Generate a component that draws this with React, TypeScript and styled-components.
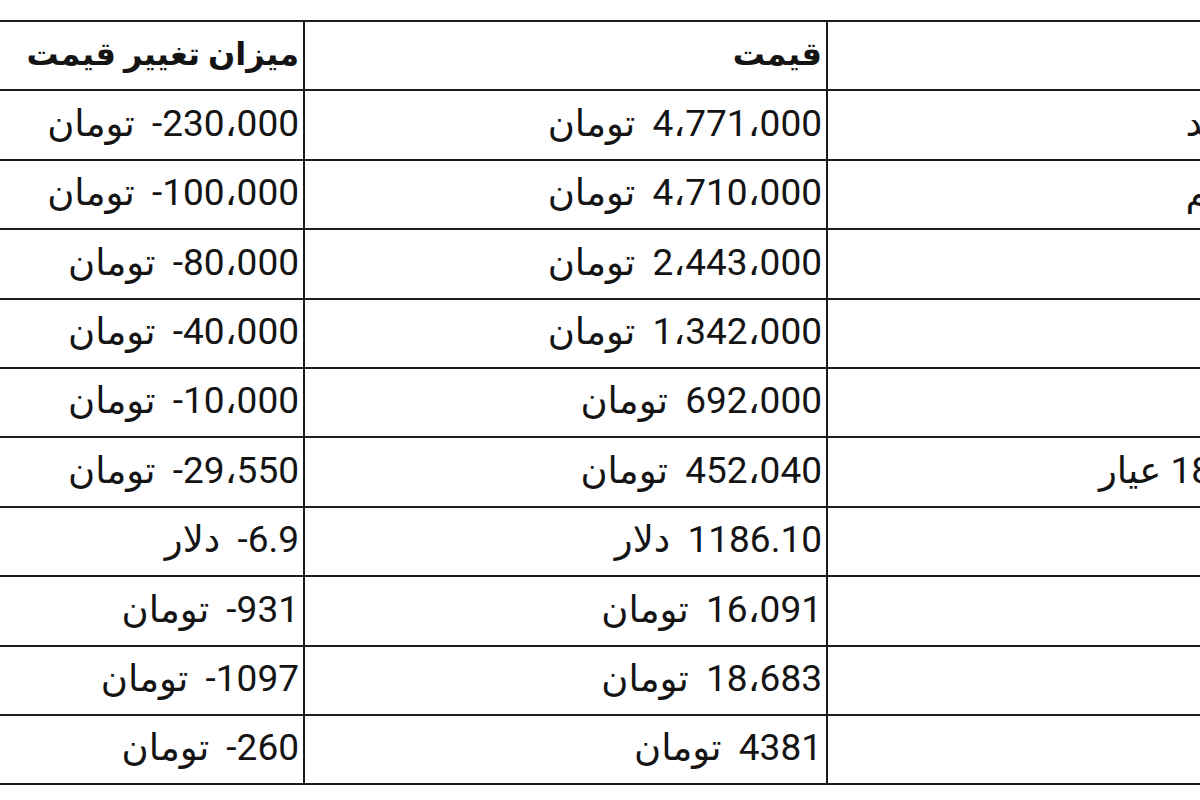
import React from "react";
import styled, { createGlobalStyle } from "styled-components";

const GlobalStyle = createGlobalStyle`
  html, body {
    margin: 0;
    padding: 0;
    background: #ffffff;
  }
  body {
    font-family: Roboto, "DejaVu Sans", sans-serif;
    color: #141414;
  }
`;

type Row = {
  name: string;
  price: string;
  change: string;
};

const rows: Row[] = [
  { name: "سکه طرح جدید", price: "4،771،000 تومان", change: "230،000- تومان" },
  { name: "سکه طرح قدیم", price: "4،710،000 تومان", change: "100،000- تومان" },
  { name: "نیم سکه", price: "2،443،000 تومان", change: "80،000- تومان" },
  { name: "ربع سکه", price: "1،342،000 تومان", change: "40،000- تومان" },
  { name: "سکه گرمی", price: "692،000 تومان", change: "10،000- تومان" },
  { name: "هر گرم طلای 18 عیار", price: "452،040 تومان", change: "29،550- تومان" },
  { name: "انس طلا", price: "1186.10 دلار", change: "6.9- دلار" },
  { name: "دلار", price: "16،091 تومان", change: "931- تومان" },
  { name: "یورو", price: "18،683 تومان", change: "1097- تومان" },
  { name: "درهم", price: "4381 تومان", change: "260- تومان" },
];

const App = () => {
  return (
    <>
      <GlobalStyle />
      <Page>
        <PriceTable dir="rtl">
          <colgroup>
            <NameCol />
            <PriceCol />
            <ChangeCol />
          </colgroup>
          <thead>
            <TableRow>
              <HeadCell>عنوان</HeadCell>
              <HeadCell>قیمت</HeadCell>
              <HeadCell>میزان تغییر قیمت</HeadCell>
            </TableRow>
          </thead>
          <tbody>
            {rows.map((row) => (
              <TableRow key={row.name}>
                <Cell>{row.name}</Cell>
                <Cell $amount>{row.price}</Cell>
                <Cell $amount>{row.change}</Cell>
              </TableRow>
            ))}
          </tbody>
        </PriceTable>
      </Page>
    </>
  );
};

export default App;

const Page = styled.div`
  width: 1200px;
  height: 800px;
  padding-top: 20px;
  box-sizing: border-box;
  overflow: hidden;
`;

const PriceTable = styled.table`
  margin-left: -37px;
  width: 1462px;
  table-layout: fixed;
  border-collapse: collapse;
  font-size: 37px;
`;

const NameCol = styled.col`
  width: 599px;
`;

const PriceCol = styled.col`
  width: 523px;
`;

const ChangeCol = styled.col`
  width: 340px;
`;

const TableRow = styled.tr`
  height: 69.4px;
`;

const Cell = styled.td<{ $amount?: boolean }>`
  border: 2px solid #1c1c1c;
  padding: 0 4px 2px 4px;
  text-align: right;
  vertical-align: middle;
  white-space: nowrap;
  line-height: 1.2;
  word-spacing: ${({ $amount }) => ($amount ? "8px" : "0")};
`;

const HeadCell = styled(Cell).attrs({ as: "th" })`
  font-size: 32px;
  font-weight: 700;
  padding-bottom: 4px;
`;
